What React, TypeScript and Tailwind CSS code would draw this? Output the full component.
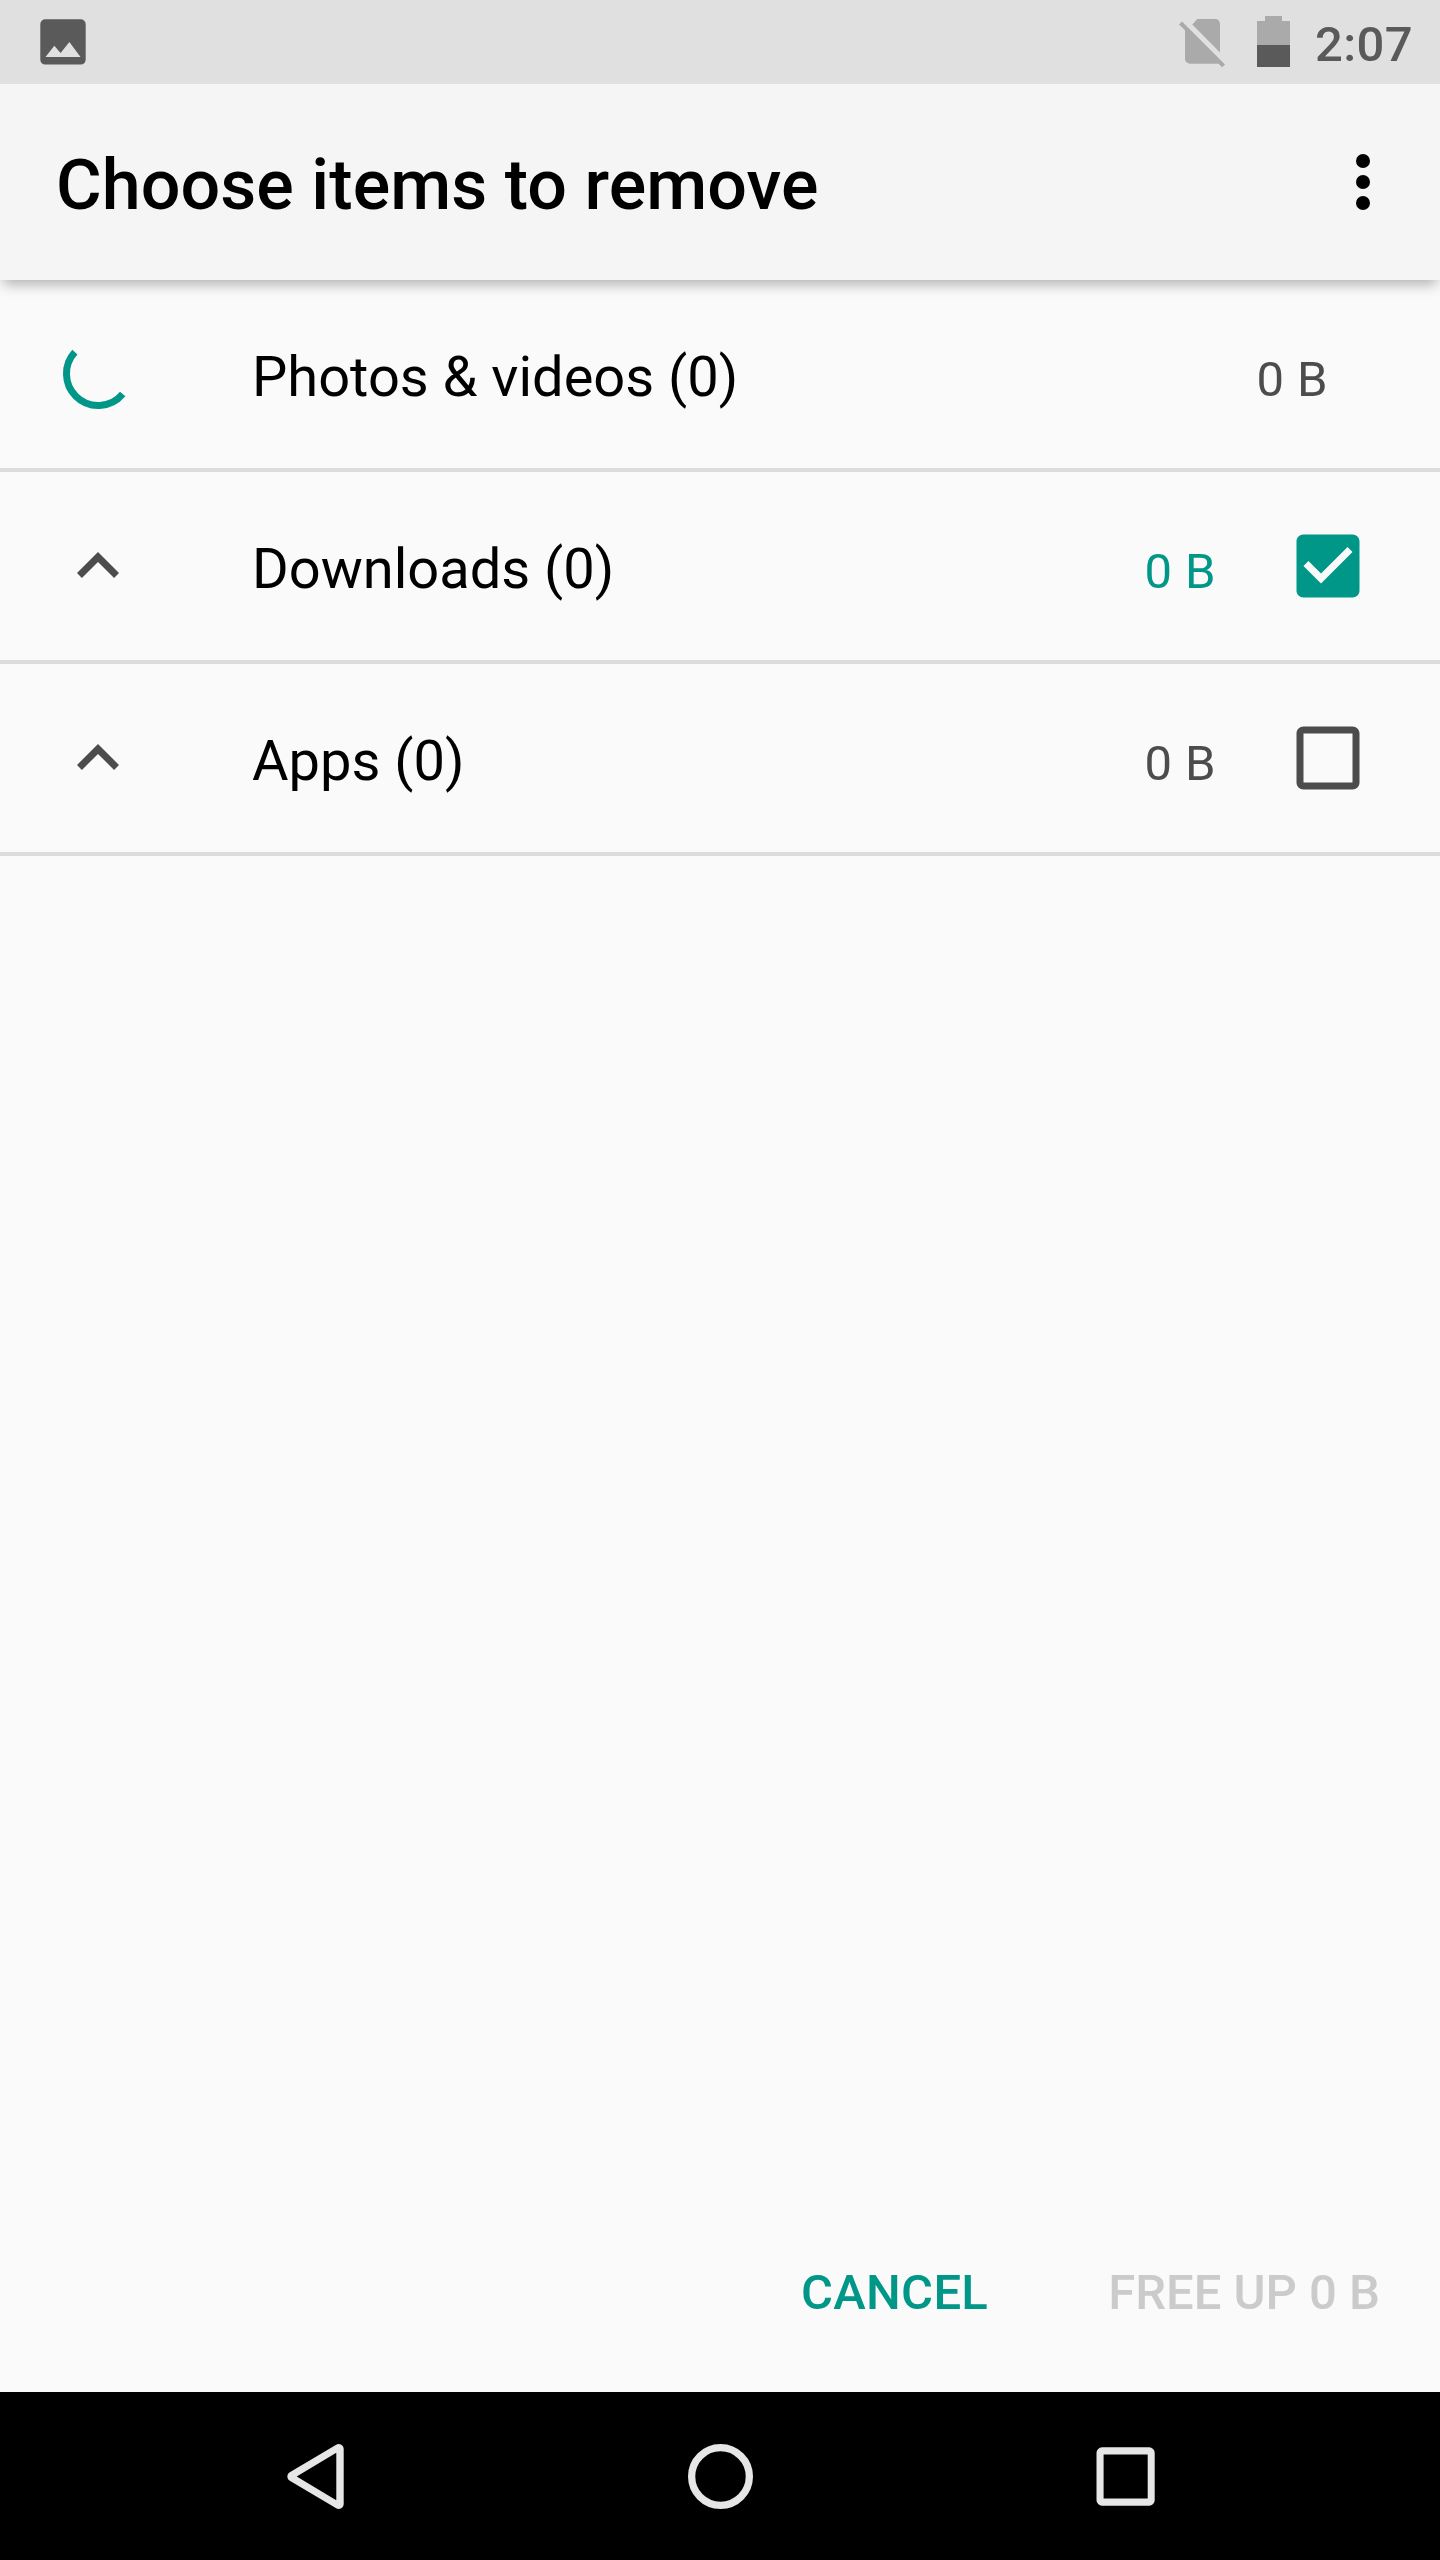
import { useState } from 'react';

interface Category {
  id: string;
  label: string;
  count: number;
  size: string;
  loading: boolean;
}

const categories: Category[] = [
  { id: 'photos', label: 'Photos & videos', count: 0, size: '0 B', loading: true },
  { id: 'downloads', label: 'Downloads', count: 0, size: '0 B', loading: false },
  { id: 'apps', label: 'Apps', count: 0, size: '0 B', loading: false },
];

function StatusBar() {
  return (
    <div className="relative z-10 h-[84px] shrink-0 bg-[#e0e0e0] flex items-center justify-between pl-10 pr-[27px]">
      <svg width="46" height="84" viewBox="0 0 46 84" fill="#5a5a5a">
        <path
          fillRule="evenodd"
          d="M5.3 19.2h35.4a5 5 0 0 1 5 5v35.4a5 5 0 0 1-5 5H5.3a5 5 0 0 1-5-5V24.2a5 5 0 0 1 5-5ZM5.5 57h35L29.4 42l-8.8 10.9-6.3-7.1Z"
        />
      </svg>
      <div className="flex items-center">
        {/* No SIM */}
        <svg width="46" height="84" viewBox="0 0 46 84" fill="#aaaaaa">
          <path d="M18.3 19.1H36.2a4.8 4.8 0 0 1 4.8 4.8V52.5L13.3 24.4Z" />
          <path d="M3 21.5 46 64.4 43.1 67.3 39.3 63.5a6 6 0 0 1-1.8.3H11a5 5 0 0 1-5-5V30.3L0 24.4Z" />
        </svg>
        {/* Battery */}
        <svg width="33" height="84" viewBox="0 0 33 84" className="ml-8">
          <path d="M0 21h8v-5h17v5h8v24H0Z" fill="#aaaaaa" />
          <path d="M0 45h33v22H0Z" fill="#5a5a5a" />
        </svg>
        <span className="ml-[25px] pt-1 text-[49px] leading-none tracking-[0.4px] font-medium text-[#5a5a5a]">
          2:07
        </span>
      </div>
    </div>
  );
}

function Toolbar() {
  return (
    <header className="relative h-[196px] shrink-0 bg-[#f5f5f5] flex items-center justify-between pl-14 pr-[35px] shadow-[0_7px_13px_-3px_rgba(0,0,0,0.31)]">
      <h1 className="pt-1.5 text-[70px] leading-none tracking-[0.06px] font-medium text-black">
        Choose items to remove
      </h1>
      <button aria-label="More options">
        <svg width="84" height="84" viewBox="0 0 84 84">
          <circle cx="42" cy="21" r="7" />
          <circle cx="42" cy="42" r="7" />
          <circle cx="42" cy="63" r="7" />
        </svg>
      </button>
    </header>
  );
}

function Spinner() {
  return (
    <svg width="84" height="84" viewBox="0 0 84 84" fill="none">
      <path
        d="M18.9 20.2A31.75 31.75 0 0 0 19.8 64.2A31.75 31.75 0 0 0 66.7 62"
        stroke="#009688"
        strokeWidth="7"
      />
    </svg>
  );
}

function Chevron() {
  return (
    <svg width="84" height="84" viewBox="0 0 24 24" fill="#4c4c4c">
      <path d="M12 8l-6 6 1.41 1.41L12 10.83l4.59 4.58L18 14z" />
    </svg>
  );
}

function CheckIcon({ checked }: { checked: boolean }) {
  return checked ? (
    <svg width="84" height="84" viewBox="0 0 24 24" fill="#009688">
      <path d="M19 3H5c-1.11 0-2 .9-2 2v14c0 1.1.89 2 2 2h14c1.11 0 2-.9 2-2V5c0-1.1-.89-2-2-2zm-9 14l-5-5 1.41-1.41L10 14.17l7.59-7.59L19 8l-9 9z" />
    </svg>
  ) : (
    <svg width="84" height="84" viewBox="0 0 24 24" fill="#4c4c4c">
      <path d="M19 5v14H5V5h14m0-2H5c-1.1 0-2 .9-2 2v14c0 1.1.9 2 2 2h14c1.1 0 2-.9 2-2V5c0-1.1-.9-2-2-2z" />
    </svg>
  );
}

function NavBar() {
  return (
    <nav className="h-[168px] shrink-0 bg-black flex items-center justify-center gap-[321px]">
      <svg width="84" height="84" viewBox="0 0 84 84" fill="#e6e6e6">
        <path
          fillRule="evenodd"
          d="M16.8 38.2 63.2 10.7a5 5 0 0 1 7.5 4.3V70a5 5 0 0 1-7.5 4.3L16.8 46.8a5 5 0 0 1 0-8.6ZM23.7 42.5 63.3 66.3V18.7Z"
        />
      </svg>
      <svg width="84" height="84" viewBox="0 0 84 84" fill="none">
        <circle cx="42.5" cy="42.5" r="28.85" stroke="#e6e6e6" strokeWidth="7.3" />
      </svg>
      <svg width="84" height="84" viewBox="0 0 84 84" fill="#e6e6e6">
        <path
          fillRule="evenodd"
          d="M19 13.3H66.2a5.5 5.5 0 0 1 5.5 5.5V66.2a5.5 5.5 0 0 1-5.5 5.5H19a5.5 5.5 0 0 1-5.5-5.5V18.8a5.5 5.5 0 0 1 5.5-5.5ZM20.6 20.5V64.5H64.7V20.5Z"
        />
      </svg>
    </nav>
  );
}

export default function App() {
  const [selected, setSelected] = useState<string[]>(['downloads']);

  const toggle = (id: string) => {
    setSelected(
      selected.includes(id) ? selected.filter((s) => s !== id) : [...selected, id]
    );
  };

  return (
    <div className="w-[1440px] h-[2560px] flex flex-col bg-[#fafafa] overflow-hidden font-['Roboto',sans-serif]">
      <StatusBar />
      <Toolbar />

      {/* Categories */}
      <main className="flex-1">
        {categories.map((cat) => {
          const checked = selected.includes(cat.id);
          return (
            <div
              key={cat.id}
              className="h-48 border-b-4 border-[#dcdcdc] flex items-center pl-14 pr-[70px]"
            >
              {cat.loading ? <Spinner /> : <Chevron />}
              <span className="flex-1 ml-28 pt-1.5 text-[56px] leading-none text-black">
                {cat.label} ({cat.count})
              </span>
              <span
                className={`pt-2.5 text-[49px] leading-none tracking-[0.4px] ${
                  checked ? 'text-[#009688]' : 'text-[#4c4c4c]'
                } ${cat.loading ? 'mr-[42px]' : 'mr-[70px]'}`}
              >
                {cat.size}
              </span>
              {!cat.loading && (
                <button
                  role="checkbox"
                  aria-checked={checked}
                  aria-label={cat.label}
                  onClick={() => toggle(cat.id)}
                >
                  <CheckIcon checked={checked} />
                </button>
              )}
            </div>
          );
        })}
      </main>

      {/* Actions */}
      <footer className="h-[200px] shrink-0 flex items-center justify-end gap-[120px] pr-[60px] text-[49px] leading-none font-medium">
        <button className="tracking-[0.3px] text-[#009688]">CANCEL</button>
        <button className="text-[#cbcbcb]" disabled>
          FREE UP 0 B
        </button>
      </footer>

      <NavBar />
    </div>
  );
}
